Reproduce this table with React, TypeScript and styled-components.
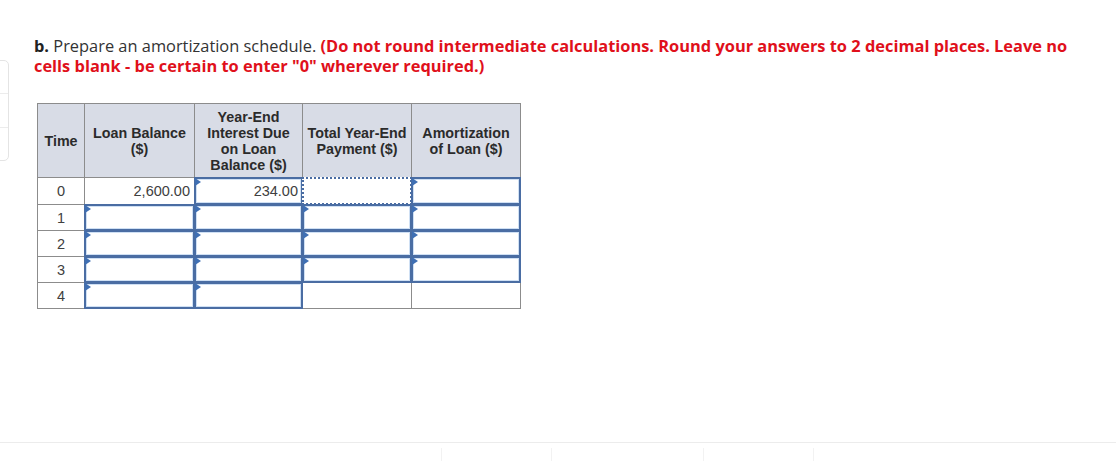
import React from "react";
import styled, { createGlobalStyle } from "styled-components";

const Global = createGlobalStyle`
  html, body { margin: 0; padding: 0; background: #fff; }
  body { font-family: "Open Sans", "Liberation Sans", sans-serif; }
`;

const Page = styled.div`
  position: relative;
  width: 1116px;
  height: 461px;
  overflow: hidden;
  display: flex;
  flex-direction: column;
`;

const Main = styled.div`
  height: 443px;
  box-sizing: border-box;
  padding: 36px 0 0 34px;
`;

const SideTab = styled.div`
  position: absolute;
  left: -6px;
  top: 60px;
  width: 13px;
  height: 99px;
  border: 1px solid #e4e4e4;
  border-radius: 0 5px 5px 0;
  display: flex;
  flex-direction: column;
`;

const SideTabPart = styled.div`
  flex: 1;
  border-bottom: 1px solid #ececec;
  &:last-child { border-bottom: none; }
`;

const Prompt = styled.p`
  margin: 0;
  font-family: "Open Sans", "Liberation Sans", sans-serif;
  font-size: 16.4px;
  line-height: 20px;
  color: #333;
  white-space: nowrap;
`;

const Label = styled.b`
  font-weight: 700;
  color: #222;
`;

const Warn = styled.span`
  font-weight: 700;
  color: #e0101b;
`;

const Table = styled.table`
  margin: 27px 0 0 3px;
  border-collapse: collapse;
  font-family: "Liberation Sans", Arial, sans-serif;
  table-layout: fixed;
`;

const Th = styled.th<{ $w: number }>`
  width: ${(p) => p.$w}px;
  height: 74px;
  box-sizing: border-box;
  padding: 0 1px;
  background: #d8dce6;
  border: 1px solid #8c8c8c;
  font-size: 14.3px;
  line-height: 16px;
  font-weight: 700;
  color: #2b2b2b;
  text-align: center;
  vertical-align: middle;
`;

const Row = styled.tr<{ $h: number }>`
  height: ${(p) => p.$h}px;
`;

const Td = styled.td<{ $align?: string }>`
  box-sizing: border-box;
  padding: 0 4px;
  border: 1px solid #8c8c8c;
  font-size: 14.5px;
  color: #404040;
  text-align: ${(p) => p.$align || "center"};
  vertical-align: middle;
`;

const InputTd = styled.td`
  box-sizing: border-box;
  padding: 0;
  border: 1px solid #8c8c8c;
  position: relative;
`;

const InputBox = styled.div<{ $focused?: boolean }>`
  position: absolute;
  inset: -1px;
  box-sizing: border-box;
  border: 2px ${(p) => (p.$focused ? "dotted" : "solid")} #4a6da3;
  box-shadow: ${(p) => (p.$focused ? "none" : "inset 0 0 0 1px #cfe0f4")};
  background: #fff;
  display: flex;
  align-items: center;
  justify-content: flex-end;
  padding-right: 3px;
  font-size: 14.5px;
  color: #404040;
`;

const Marker = styled.span`
  position: absolute;
  left: 0;
  top: 0;
  width: 0;
  height: 0;
  border-top: 4px solid transparent;
  border-bottom: 4px solid transparent;
  border-left: 6px solid #3f6fb3;
`;

const Footer = styled.div`
  height: 18px;
  border-top: 1px solid #ececec;
  display: flex;
  padding-left: 441px;
`;

const FooterSeg = styled.div<{ $w: number }>`
  width: ${(p) => p.$w}px;
  margin-top: 5px;
  border-left: 1px solid #f2f2f2;
`;

type Cell =
  | { kind: "text"; value: string }
  | { kind: "input"; value?: string; focused?: boolean; marker?: boolean }
  | { kind: "empty" };

const full: Cell[] = [
  { kind: "input", marker: true },
  { kind: "input", marker: true },
  { kind: "input", marker: true },
  { kind: "input", marker: true },
];

const rows: Cell[][] = [
  [
    { kind: "text", value: "2,600.00" },
    { kind: "input", value: "234.00", marker: true },
    { kind: "input", focused: true, marker: false },
    { kind: "input", marker: true },
  ],
  full,
  full,
  full,
  [{ kind: "input", marker: true }, { kind: "input", marker: true }, { kind: "empty" }, { kind: "empty" }],
];

const headers: { w: number; label: React.ReactNode }[] = [
  { w: 47, label: "Time" },
  { w: 110, label: <>Loan Balance<br />($)</> },
  { w: 108, label: <>Year-End<br />Interest Due<br />on Loan<br />Balance ($)</> },
  { w: 109, label: <>Total Year-End<br />Payment ($)</> },
  { w: 109, label: <>Amortization<br />of Loan ($)</> },
];

export default function App() {
  return (
    <Page>
      <Global />
      <SideTab>
        <SideTabPart />
        <SideTabPart />
        <SideTabPart />
      </SideTab>
      <Main>
        <Prompt>
          <Label>b.</Label> Prepare an amortization schedule.{" "}
          <Warn>
            (Do not round intermediate calculations. Round your answers to 2 decimal places. Leave no
            <br />
            cells blank - be certain to enter "0" wherever required.)
          </Warn>
        </Prompt>
        <Table>
          <thead>
            <tr>
              {headers.map((h, i) => (
                <Th key={i} $w={h.w}>{h.label}</Th>
              ))}
            </tr>
          </thead>
          <tbody>
            {rows.map((r, ri) => (
              <Row key={ri} $h={ri === 0 ? 27 : 26}>
                <Td>{ri}</Td>
                {r.map((c, ci) => {
                  if (c.kind === "text") return <Td key={ci} $align="right">{c.value}</Td>;
                  if (c.kind === "empty") return <Td key={ci} />;
                  return (
                    <InputTd key={ci}>
                      <InputBox $focused={c.focused}>{c.value}</InputBox>
                      {c.marker && <Marker />}
                    </InputTd>
                  );
                })}
              </Row>
            ))}
          </tbody>
        </Table>
      </Main>
      <Footer>
        <FooterSeg $w={109} />
        <FooterSeg $w={151} />
        <FooterSeg $w={109} />
        <FooterSeg $w={109} />
      </Footer>
    </Page>
  );
}
